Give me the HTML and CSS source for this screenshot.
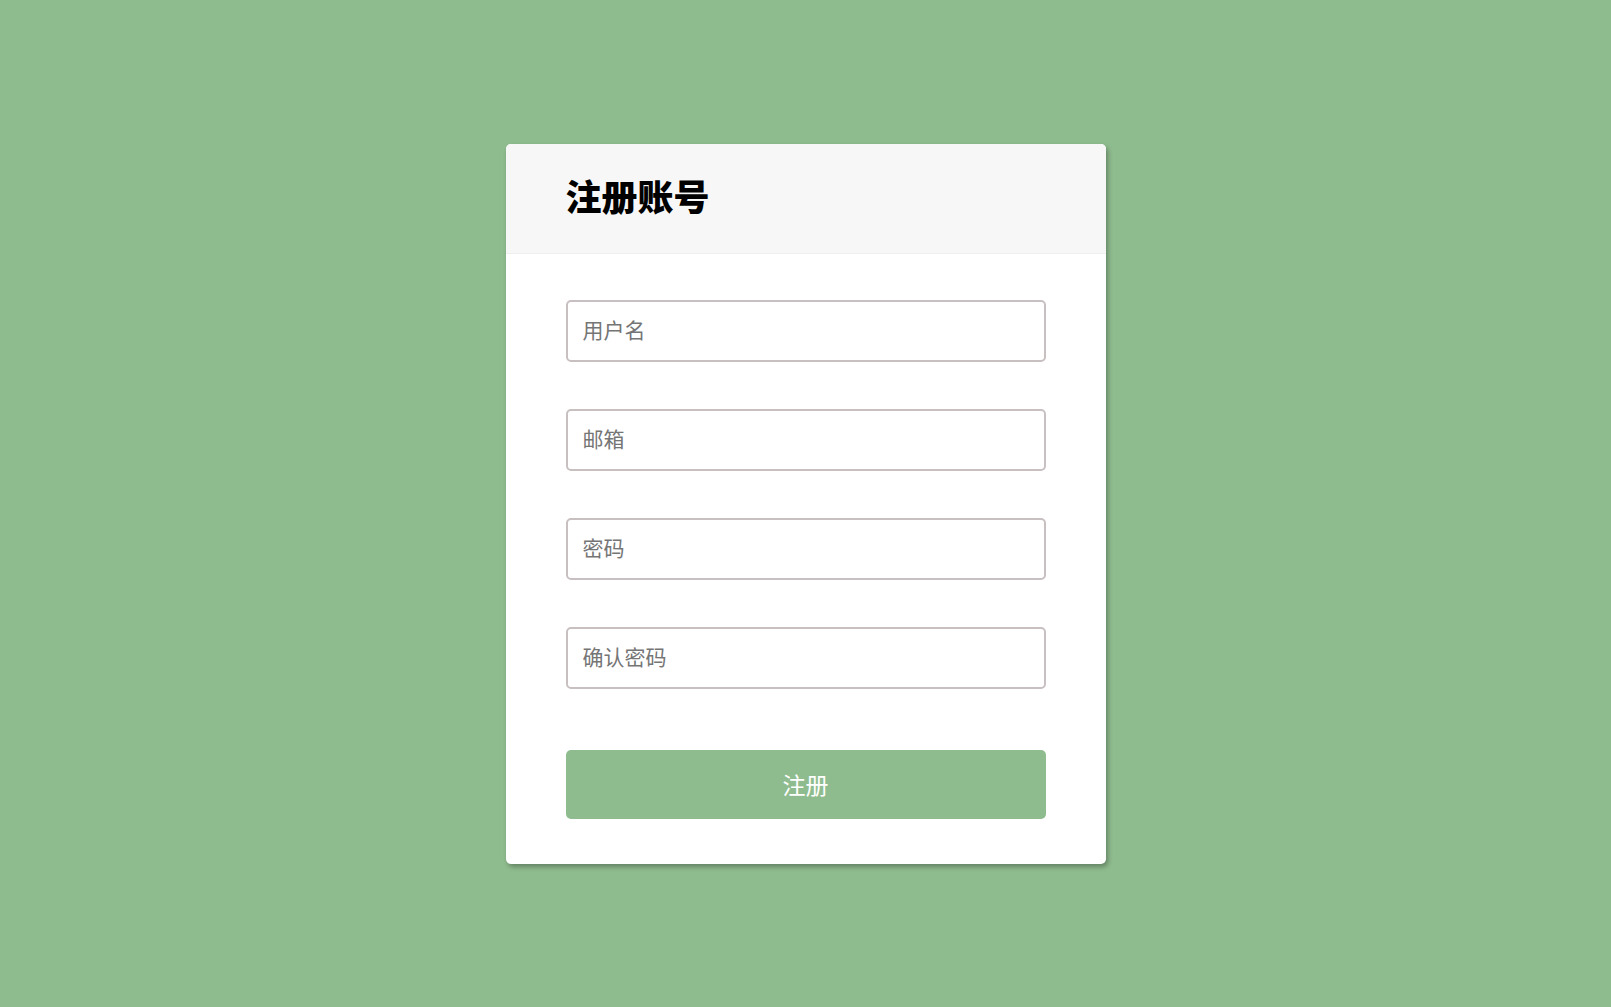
FILE: index.html
```html
<!DOCTYPE html>
<html lang="zh-CN">
<head>
    <meta charset="UTF-8">
    <meta name="viewport" content="width=device-width, initial-scale=1.0">
    <title>注册账号</title>
    <link rel="stylesheet" href="styles.css">
</head>
<body>

<div class="register-box">
    <div class="register-header">
        <h1>注册账号</h1>
    </div>
    <form class="register-form" onsubmit="return false;">
        <input type="text" placeholder="用户名">
        <input type="email" placeholder="邮箱">
        <input type="password" placeholder="密码">
        <input type="password" placeholder="确认密码">
        <button type="submit">注册</button>
    </form>
</div>

</body>
</html>
```

FILE: styles.css
```css
* {
    box-sizing: border-box;
}
body {
    font-family: "Liberation Sans", "Noto Sans CJK SC", sans-serif;
    display: flex;
    justify-content: center;
    align-items: center;
    height: 100vh;
    margin: 0;
    background-color: #8fbc8f;
}
.register-box {
    width: 600px;
    background-color: #fff;
    border-radius: 5px;
    box-shadow: 2px 3px 5px rgba(0, 0, 0, 0.3);
    overflow: hidden;
}
.register-header {
    height: 110px;
    padding: 0 60px 6px;
    display: flex;
    align-items: center;
    background-color: #f7f7f7;
    border-bottom: 1px solid #efefef;
}
.register-header h1 {
    margin: 0;
    font-size: 36px;
    font-weight: 900;
    color: #000;
}
.register-form {
    display: flex;
    flex-direction: column;
    padding: 46px 60px 45px;
}
.register-form input {
    height: 62px;
    margin-bottom: 47px;
    padding: 0 15px;
    font-family: inherit;
    font-size: 21px;
    color: #333;
    border: 2px solid #c8c0c0;
    border-radius: 5px;
    outline: none;
}
.register-form input:last-of-type {
    margin-bottom: 61px;
}
.register-form input::placeholder {
    color: #757575;
}
.register-form button {
    height: 69px;
    font-family: inherit;
    font-size: 23px;
    color: #fff;
    background-color: #8fbc8f;
    border: none;
    border-radius: 5px;
    cursor: pointer;
}
.register-form button:hover {
    background-color: #82b082;
}
```
